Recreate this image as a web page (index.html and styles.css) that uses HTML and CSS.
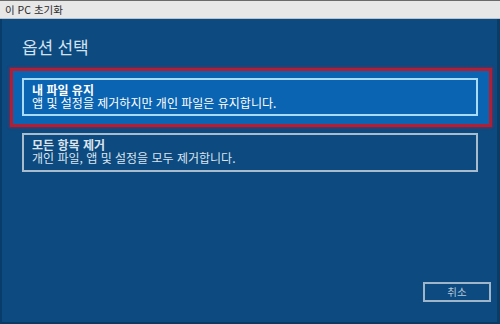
FILE: index.html
```html
<!DOCTYPE html>
<html lang="ko">
<head>
<meta charset="utf-8">
<link rel="stylesheet" href="styles.css">
</head>
<body>
<div class="window">
  <div class="titlebar">이 PC 초기화</div>
  <div class="content">
    <h1 class="heading">옵션 선택</h1>
    <div class="highlight">
      <div class="option selected">
        <div class="opt-title">내 파일 유지</div>
        <div class="opt-desc">앱 및 설정을 제거하지만 개인 파일은 유지합니다.</div>
      </div>
    </div>
    <div class="option plain">
      <div class="opt-title">모든 항목 제거</div>
      <div class="opt-desc">개인 파일, 앱 및 설정을 모두 제거합니다.</div>
    </div>
    <div class="footer">
      <div class="cancel">취소</div>
    </div>
  </div>
</div>
</body>
</html>
```
FILE: styles.css
```css
html, body {
  margin: 0;
  padding: 0;
  width: 500px;
  height: 324px;
  overflow: hidden;
  font-family: "Noto Sans CJK KR", "Noto Sans", sans-serif;
}
.window {
  width: 500px;
  height: 324px;
  display: flex;
  flex-direction: column;
  box-sizing: border-box;
}
.titlebar {
  height: 19px;
  box-sizing: border-box;
  border-top: 1px solid #6a6a6a;
  border-bottom: 1px solid #b9c3cc;
  background: #e7e7e7;
  color: #2a2a2a;
  font-size: 10.5px;
  line-height: 17px;
  padding-left: 5px;
}
.content {
  flex: 1;
  background: #0c4a80;
  border-left: 2px solid #083d6b;
  border-right: 3px solid #0a3c66;
  border-bottom: 2px solid #093a63;
  display: flex;
  flex-direction: column;
  padding: 0;
  box-sizing: border-box;
}
.heading {
  margin: 15px 0 0 20px;
  font-size: 17px;
  font-weight: 400;
  line-height: 25px;
  color: #d2e2f2;
  letter-spacing: -0.2px;
}
.highlight {
  margin: 9px 5px 0 8px;
  border: 3px solid #b21e34;
  box-shadow: 0 0 2px 1px rgba(170, 30, 60, 0.55);
  background: #0a64b2;
  padding: 7px 11px 8px 9px;
}
.option {
  box-sizing: border-box;
  border: 2px solid #a8dcff;
  padding: 3px 8px 0 8px;
}
.selected {
  height: 38px;
  background: #0a64b2;
  color: #ffffff;
}
.plain {
  height: 39px;
  margin: 6px 19px 0 20px;
  border-color: #a9bccd;
  color: #dbe4ee;
  padding-top: 3px;
}
.opt-title {
  font-size: 12px;
  font-weight: 700;
  line-height: 13px;
}
.opt-desc {
  font-size: 12px;
  line-height: 13px;
}
.footer {
  margin-top: auto;
  display: flex;
  justify-content: flex-end;
  padding: 0 6px 20px 0;
}
.cancel {
  width: 68px;
  height: 20px;
  box-sizing: border-box;
  border: 2px solid #9fb6ca;
  color: #b9c9d8;
  font-size: 10.5px;
  line-height: 16px;
  text-align: center;
}
```
